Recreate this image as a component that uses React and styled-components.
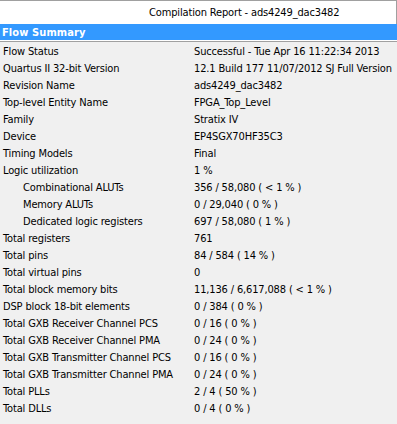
import React from 'react'
import styled, { createGlobalStyle } from 'styled-components'

const GlobalStyle = createGlobalStyle`
  html, body {
    margin: 0;
    padding: 0;
    background: #f0f0f0;
  }
`;

const Window = styled.div`
  width: 397px;
  height: 424px;
  overflow: hidden;
  background: #f0f0f0;
  font-family: 'DejaVu Sans Condensed', 'DejaVu Sans', Tahoma, sans-serif;
  font-size: 11px;
  letter-spacing: -0.15px;
  color: #000;
`;

const TitleBar = styled.div`
  height: 23px;
  border-top: 1px solid #a0a0a0;
  border-right: 1px solid #a0a0a0;
  background: #fff;
  display: flex;
  align-items: center;
  padding-left: 149px;
  white-space: nowrap;
`;

const SectionHeader = styled.div`
  height: 16px;
  background: #3399ff;
  color: #fff;
  font-weight: bold;
  font-size: 11px;
  letter-spacing: 0.1px;
  display: flex;
  align-items: center;
  padding-left: 2px;
  border-bottom: 1px solid #fff;
`;

const Divider = styled.div`
  height: 1px;
  background: #a0a0a0;
`;

const Table = styled.div`
  display: grid;
  grid-template-columns: 191px 1fr;
  grid-auto-rows: 17px;
  padding-top: 1px;
`;

const Label = styled.div`
  display: flex;
  align-items: center;
  padding-left: ${p => (p.$indent ? 23 : 3)}px;
  white-space: nowrap;
`;

const Value = styled(Label)`
  padding-left: 3px;
`;

const rows = [
  ['Flow Status', 'Successful - Tue Apr 16 11:22:34 2013'],
  ['Quartus II 32-bit Version', '12.1 Build 177 11/07/2012 SJ Full Version'],
  ['Revision Name', 'ads4249_dac3482'],
  ['Top-level Entity Name', 'FPGA_Top_Level'],
  ['Family', 'Stratix IV'],
  ['Device', 'EP4SGX70HF35C3'],
  ['Timing Models', 'Final'],
  ['Logic utilization', '1 %'],
  ['Combinational ALUTs', '356 / 58,080 ( < 1 % )', true],
  ['Memory ALUTs', '0 / 29,040 ( 0 % )', true],
  ['Dedicated logic registers', '697 / 58,080 ( 1 % )', true],
  ['Total registers', '761'],
  ['Total pins', '84 / 584 ( 14 % )'],
  ['Total virtual pins', '0'],
  ['Total block memory bits', '11,136 / 6,617,088 ( < 1 % )'],
  ['DSP block 18-bit elements', '0 / 384 ( 0 % )'],
  ['Total GXB Receiver Channel PCS', '0 / 16 ( 0 % )'],
  ['Total GXB Receiver Channel PMA', '0 / 24 ( 0 % )'],
  ['Total GXB Transmitter Channel PCS', '0 / 16 ( 0 % )'],
  ['Total GXB Transmitter Channel PMA', '0 / 24 ( 0 % )'],
  ['Total PLLs', '2 / 4 ( 50 % )'],
  ['Total DLLs', '0 / 4 ( 0 % )'],
];

const App = () => {
  return (
    <Window>
      <GlobalStyle />
      <TitleBar>Compilation Report - ads4249_dac3482</TitleBar>
      <SectionHeader>Flow Summary</SectionHeader>
      <Divider />
      <Table>
        {rows.map(([label, value, indent]) => (
          <React.Fragment key={label}>
            <Label $indent={indent}>{label}</Label>
            <Value>{value}</Value>
          </React.Fragment>
        ))}
      </Table>
    </Window>
  )
}

export default App
